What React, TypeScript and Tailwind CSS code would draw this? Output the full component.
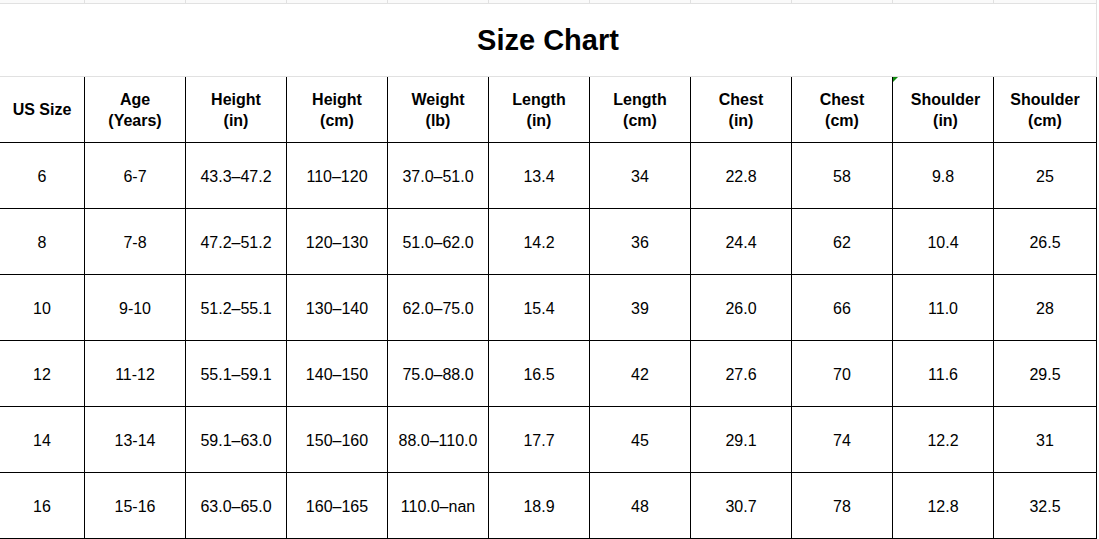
const headers = [
  ['US Size'],
  ['Age', '(Years)'],
  ['Height', '(in)'],
  ['Height', '(cm)'],
  ['Weight', '(lb)'],
  ['Length', '(in)'],
  ['Length', '(cm)'],
  ['Chest', '(in)'],
  ['Chest', '(cm)'],
  ['Shoulder', '(in)'],
  ['Shoulder', '(cm)'],
]

const rows = [
  ['6', '6-7', '43.3–47.2', '110–120', '37.0–51.0', '13.4', '34', '22.8', '58', '9.8', '25'],
  ['8', '7-8', '47.2–51.2', '120–130', '51.0–62.0', '14.2', '36', '24.4', '62', '10.4', '26.5'],
  ['10', '9-10', '51.2–55.1', '130–140', '62.0–75.0', '15.4', '39', '26.0', '66', '11.0', '28'],
  ['12', '11-12', '55.1–59.1', '140–150', '75.0–88.0', '16.5', '42', '27.6', '70', '11.6', '29.5'],
  ['14', '13-14', '59.1–63.0', '150–160', '88.0–110.0', '17.7', '45', '29.1', '74', '12.2', '31'],
  ['16', '15-16', '63.0–65.0', '160–165', '110.0–nan', '18.9', '48', '30.7', '78', '12.8', '32.5'],
]

const grid = 'grid grid-cols-[85px_repeat(9,101px)_103px] w-[1097px]'

export default function App() {
  return (
    <div className="w-[1099px] h-[539px] bg-white text-black overflow-hidden font-['Liberation_Sans',Arial,sans-serif]">
      {/* row above, cut off */}
      <div className={`${grid} h-[4px] border-b border-[#e1e1e1]`}>
        {headers.map((_, i) => (
          <div key={i} className="border-r border-[#e1e1e1] bg-[#fafafa]" />
        ))}
      </div>

      {/* title */}
      <div className="w-[1097px] h-[73px] pt-[2px] flex items-center justify-center border-b border-r border-[#e1e1e1] text-[29px] font-bold">
        Size Chart
      </div>

      {/* header row */}
      <div className={`${grid} h-[66px]`}>
        {headers.map((h, i) => (
          <div
            key={i}
            className={`relative flex flex-col items-center justify-center border-r border-b border-black text-[16px] font-bold leading-[21px] ${i === 9 ? 'pl-[5px]' : ''}`}
          >
            {i === 9 && (
              <span className="absolute left-0 top-0 w-0 h-0 border-t-[5px] border-r-[5px] border-t-[#0f8a0f] border-r-transparent" />
            )}
            {h.map((line) => (
              <span key={line}>{line}</span>
            ))}
          </div>
        ))}
      </div>

      {/* body */}
      {rows.map((r, ri) => (
        <div key={ri} className={`${grid} h-[66px]`}>
          {r.map((v, ci) => (
            <div key={ci} className="flex items-center justify-center pt-[2px] border-r border-b border-black text-[16px]">
              {v}
            </div>
          ))}
        </div>
      ))}
    </div>
  )
}
